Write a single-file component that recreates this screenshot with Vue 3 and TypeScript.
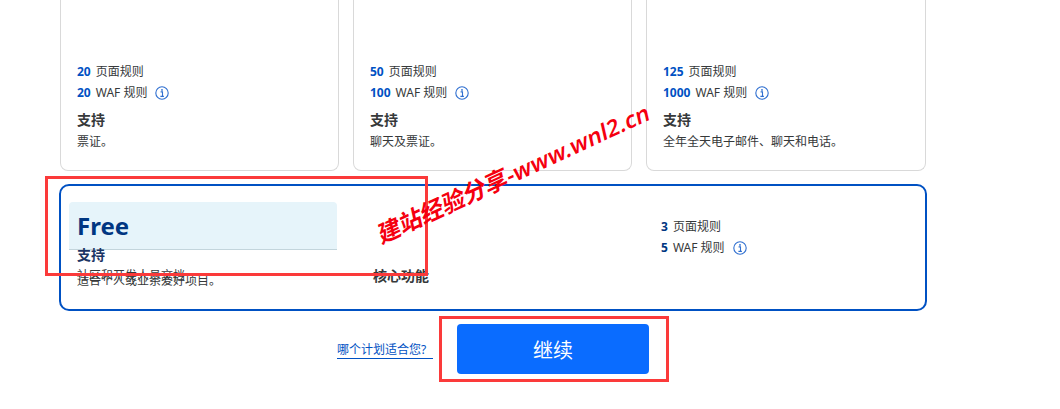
<script setup lang="ts">
interface Plan {
  pages: number
  waf: number
  desc: string
}
const plans: Plan[] = [
  { pages: 20, waf: 20, desc: '票证。' },
  { pages: 50, waf: 100, desc: '聊天及票证。' },
  { pages: 125, waf: 1000, desc: '全年全天电子邮件、聊天和电话。' },
]
</script>

<template>
  <div class="page">
    <div class="cards">
      <div v-for="p in plans" :key="p.pages" class="card">
        <div class="rule"><b>{{ p.pages }}</b> 页面规则</div>
        <div class="rule">
          <b>{{ p.waf }}</b> WAF 规则
          <svg class="info" viewBox="0 0 14 14" width="14" height="14">
            <circle cx="7" cy="7" r="6.2" fill="none" stroke="#2f6fd0" stroke-width="1.1" />
            <circle cx="7" cy="3.9" r="0.9" fill="#2f6fd0" />
            <path d="M5.6 5.9H7.5V10.2M5.4 10.4H8.9" fill="none" stroke="#2f6fd0" stroke-width="1.1" />
          </svg>
        </div>
        <div class="support">支持</div>
        <div class="desc">{{ p.desc }}</div>
      </div>
    </div>

    <div class="free">
      <div class="free-left">
        <div class="free-head">Free</div>
        <div class="support free-support">支持</div>
        <div class="stack">
          <div class="desc">社区和开发人员文档</div>
          <div class="desc second">适合个人或业余爱好项目。</div>
        </div>
      </div>
      <div class="free-mid">核心功能</div>
      <div class="free-right">
        <div class="rule"><b class="dark">3</b> 页面规则</div>
        <div class="rule">
          <b class="dark">5</b> WAF 规则
          <svg class="info" viewBox="0 0 14 14" width="14" height="14">
            <circle cx="7" cy="7" r="6.2" fill="none" stroke="#2f6fd0" stroke-width="1.1" />
            <circle cx="7" cy="3.9" r="0.9" fill="#2f6fd0" />
            <path d="M5.6 5.9H7.5V10.2M5.4 10.4H8.9" fill="none" stroke="#2f6fd0" stroke-width="1.1" />
          </svg>
        </div>
      </div>
    </div>

    <div class="actions">
      <a class="which">哪个计划适合您?</a>
      <button class="continue">继续</button>
    </div>

    <div class="mark mark-a"></div>
    <div class="mark mark-b"></div>
    <div class="watermark">建站经验分享<span class="wm-latin">-www.wnl2.cn</span></div>
  </div>
</template>

<style>
html, body { margin: 0; background: #fff; }
</style>

<style scoped>
.page {
  position: relative;
  width: 1060px;
  height: 409px;
  overflow: hidden;
  box-sizing: border-box;
  padding-left: 60px;
  font-family: "Noto Sans", "Noto Sans CJK SC", sans-serif;
  font-size: 12px;
  color: #36393a;
}
.cards {
  display: grid;
  grid-template-columns: 279px 279px 280px;
  gap: 14px;
  width: 866px;
}
.card {
  height: 171px;
  box-sizing: border-box;
  border: 1px solid #d9d9d9;
  border-top: none;
  border-radius: 0 0 8px 8px;
  padding: 0 16px 18px;
  display: flex;
  flex-direction: column;
  justify-content: flex-end;
}
.rule {
  height: 21px;
  line-height: 21px;
  display: flex;
  align-items: center;
  gap: 5px;
  white-space: nowrap;
}
.rule b {
  color: #0051c3;
  font-weight: 700;
}
.rule b.dark { color: #003681; }
.info { margin-left: 3px; }
.support {
  margin-top: 7px;
  font-size: 14px;
  font-weight: 700;
  line-height: 20px;
}
.desc {
  line-height: 20px;
  margin-top: 2px;
}
.free {
  margin: 13px 0 0 -1px;
  width: 868px;
  height: 127px;
  box-sizing: border-box;
  border: 2px solid #0051c3;
  border-radius: 10px;
  display: grid;
  grid-template-columns: 312px 288px 1fr;
}
.free-left {
  padding: 16px 0 0 8px;
}
.free-head {
  width: 268px;
  height: 48px;
  box-sizing: border-box;
  background: #e6f4fa;
  border-bottom: 1px solid #c3d5dc;
  border-radius: 4px 4px 0 0;
  padding-left: 8px;
  font-size: 24px;
  font-weight: 700;
  line-height: 48px;
  color: #003681;
}
.free-support {
  margin: -5px 0 0 8px;
  color: #1c3564;
}
.stack {
  margin: 1px 0 0 8px;
  display: grid;
}
.stack .desc {
  grid-area: 1 / 1;
  margin: 0;
}
.stack .second { transform: translateY(5px); }
.free-mid {
  padding-top: 80px;
  font-size: 14px;
  font-weight: 700;
  line-height: 20px;
}
.free-right {
  padding-top: 30px;
}
.actions {
  display: flex;
  align-items: flex-start;
  margin: 13px 0 0 277px;
  gap: 24px;
}
.which {
  width: 96px;
  margin-top: 18px;
  height: 16px;
  line-height: 16px;
  border-bottom: 1px solid #0051c3;
  color: #0051c3;
  white-space: nowrap;
}
.continue {
  width: 192px;
  height: 50px;
  border: none;
  border-radius: 4px;
  background: #0a6cff;
  color: #fff;
  font-family: inherit;
  font-size: 20px;
}
.mark {
  position: absolute;
  box-sizing: border-box;
  border: 3px solid #fb3a3a;
  pointer-events: none;
}
.mark-a {
  left: 45px;
  top: 176px;
  width: 383px;
  height: 100px;
}
.mark-b {
  left: 439px;
  top: 316px;
  width: 230px;
  height: 66px;
}
.watermark {
  position: absolute;
  left: 379px;
  top: 221px;
  color: #f5000f;
  font-size: 23.5px;
  font-weight: 700;
  line-height: 28px;
  white-space: nowrap;
  transform: rotate(-24.8deg) skewX(-12deg);
  transform-origin: 0 50%;
}
.wm-latin {
  font-size: 22.5px;
  font-weight: 600;
  letter-spacing: 0.3px;
}
</style>
